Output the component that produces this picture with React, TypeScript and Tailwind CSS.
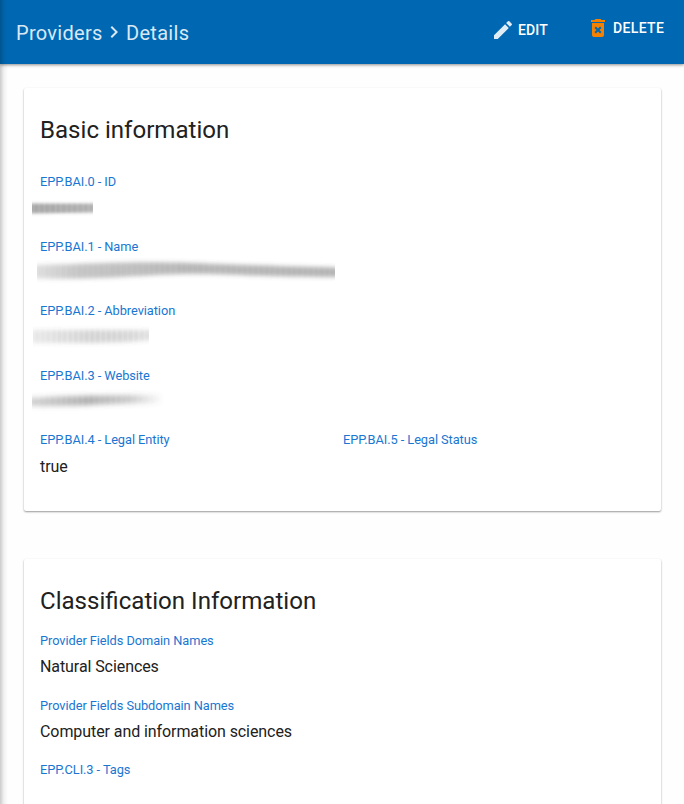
import type { ReactNode } from "react";

function Field({ label, children }: { label: string; children?: ReactNode }) {
  return (
    <div className="h-[64.5px] flex-1">
      <div className="h-5 text-[12.8px] leading-5 tracking-[-0.06px] text-[#1976d2]">{label}</div>
      <div className="mt-[4.3px] h-6 text-base leading-6 tracking-[-0.08px]">{children}</div>
    </div>
  );
}

type SmudgeProps = {
  id: string;
  className: string;
  width: number;
  path: string;
  stops: [number, number][];
  blur: number;
  stripe: number;
};

function Smudge({ id, className, width, path, stops, blur, stripe }: SmudgeProps) {
  return (
    <svg className={className} width={width} height="32" viewBox={`0 0 ${width} 32`}>
      <defs>
        <linearGradient id={`${id}-tone`}>
          {stops.map(([offset, opacity]) => (
            <stop key={offset} offset={offset} stopColor="#555" stopOpacity={opacity} />
          ))}
        </linearGradient>
        <filter id={`${id}-soft`} x="-20%" y="-100%" width="140%" height="300%">
          <feGaussianBlur stdDeviation={`0.5 ${blur}`} />
        </filter>
        <pattern id={`${id}-stripes`} width="5.5" height="32" patternUnits="userSpaceOnUse">
          <rect x="0.5" width="2" height="32" fill="#fff" opacity={stripe} />
        </pattern>
      </defs>
      <path d={path} fill={`url(#${id}-tone)`} filter={`url(#${id}-soft)`} />
      <rect width={width} height="32" fill={`url(#${id}-stripes)`} />
    </svg>
  );
}

export default function App() {
  return (
    <div className="relative h-[804px] w-[684px] overflow-hidden bg-[#fefefe] font-['Roboto',sans-serif] text-[#212121]">
      <header className="relative flex h-16 items-start bg-[#0068b3] text-white shadow-[0_1px_3px_rgba(0,0,0,0.45)]">
        <nav className="ml-4 mt-[19px] flex h-7 items-center text-xl leading-7 tracking-[0.3px] text-[#d9e8f4]">
          <span className="w-[86px]">Providers</span>
          <svg className="-mt-0.5 size-6" viewBox="0 0 24 24" fill="currentColor">
            <path d="M10 6 8.59 7.41 13.17 12l-4.58 4.59L10 18l6-6z" />
          </svg>
          <span>Details</span>
        </nav>
        <button className="ml-auto mt-[18px] flex h-6 w-[95px] items-center text-sm font-medium tracking-[0.15px]">
          <svg className="mr-[3px] size-6" viewBox="0 0 24 24" fill="#e0edf6">
            <path d="M3 17.25V21h3.75L17.81 9.94l-3.75-3.75L3 17.25zM20.71 7.04a1 1 0 0 0 0-1.41l-2.34-2.34a1 1 0 0 0-1.41 0l-1.83 1.83 3.75 3.75 1.83-1.83z" />
          </svg>
          EDIT
        </button>
        <button className="mt-4 flex h-6 w-[98px] items-center text-sm font-medium tracking-[0.35px]">
          <svg className="mr-[3px] size-6 shrink-0" viewBox="0 0 24 24" fill="#f48100">
            <path d="M6 19c0 1.1.9 2 2 2h8c1.1 0 2-.9 2-2V7H6v12zm2.46-7.12 1.41-1.41L12 12.59l2.12-2.12 1.41 1.41L13.41 14l2.12 2.12-1.41 1.41L12 15.41l-2.12 2.12-1.41-1.41L10.59 14l-2.13-2.12zM15.5 4l-1-1h-5l-1 1H5v2h14V4z" />
          </svg>
          DELETE
        </button>
      </header>

      <main className="flex flex-col gap-12 pl-6 pr-[23px] pt-6">
        <section className="h-[423px] shrink-0 rounded-[2px] bg-white px-4 pt-[26px] shadow-[0_1px_2px_rgba(0,0,0,0.4)]">
          <h2 className="mb-[26.3px] text-[24.08px] leading-8">Basic information</h2>
          <Field label="EPP.BAI.0 - ID">
            <Smudge id="id" className="-ml-2 -mt-1" width={61} path="M-5 10.5H66V19.5L-5 20.5Z" stops={[[0, 0.52], [1, 0.45]]} blur={1.8} stripe={0.08} />
          </Field>
          <Field label="EPP.BAI.1 - Name">
            <Smudge id="name" className="-ml-[3px] -mt-1" width={298} path="M-5 8C55 7 95 4 155 6S240 9 303 10.500V20C225 20 195 17 155 17S55 24 -5 21Z" stops={[[0, 0.18], [0.15, 0.34], [0.5, 0.42], [1, 0.44]]} blur={2} stripe={0.04} />
          </Field>
          <Field label="EPP.BAI.2 - Abbreviation">
            <Smudge id="abbr" className="-ml-[7px] -mt-1" width={116} path="M-5 8H121V18C80 22 45 21 -5 21Z" stops={[[0, 0.12], [0.5, 0.25], [0.8, 0.23], [1, 0.16]]} blur={2.2} stripe={0.16} />
          </Field>
          <Field label="EPP.BAI.3 - Website">
            <Smudge id="web" className="-ml-2 -mt-1" width={132} path="M-5 12C30 10 60 9 132 9V17C80 17 45 21 -5 20Z" stops={[[0, 0.26], [0.45, 0.46], [0.75, 0.31], [1, 0]]} blur={2.6} stripe={0.06} />
          </Field>
          <div className="flex gap-px">
            <Field label="EPP.BAI.4 - Legal Entity">true</Field>
            <Field label="EPP.BAI.5 - Legal Status" />
          </div>
        </section>

        <section className="h-[423px] shrink-0 rounded-[2px] bg-white px-4 pt-[26px] shadow-[0_1px_2px_rgba(0,0,0,0.4)]">
          <h2 className="mb-[14px] text-[24.08px] leading-8">Classification Information</h2>
          <Field label="Provider Fields Domain Names">Natural Sciences</Field>
          <Field label="Provider Fields Subdomain Names">Computer and information sciences</Field>
          <Field label="EPP.CLI.3 - Tags" />
        </section>
      </main>

      <div className="pointer-events-none absolute inset-y-0 left-0 w-2 bg-linear-to-r from-black/20 via-black/5 to-transparent" />
    </div>
  );
}
